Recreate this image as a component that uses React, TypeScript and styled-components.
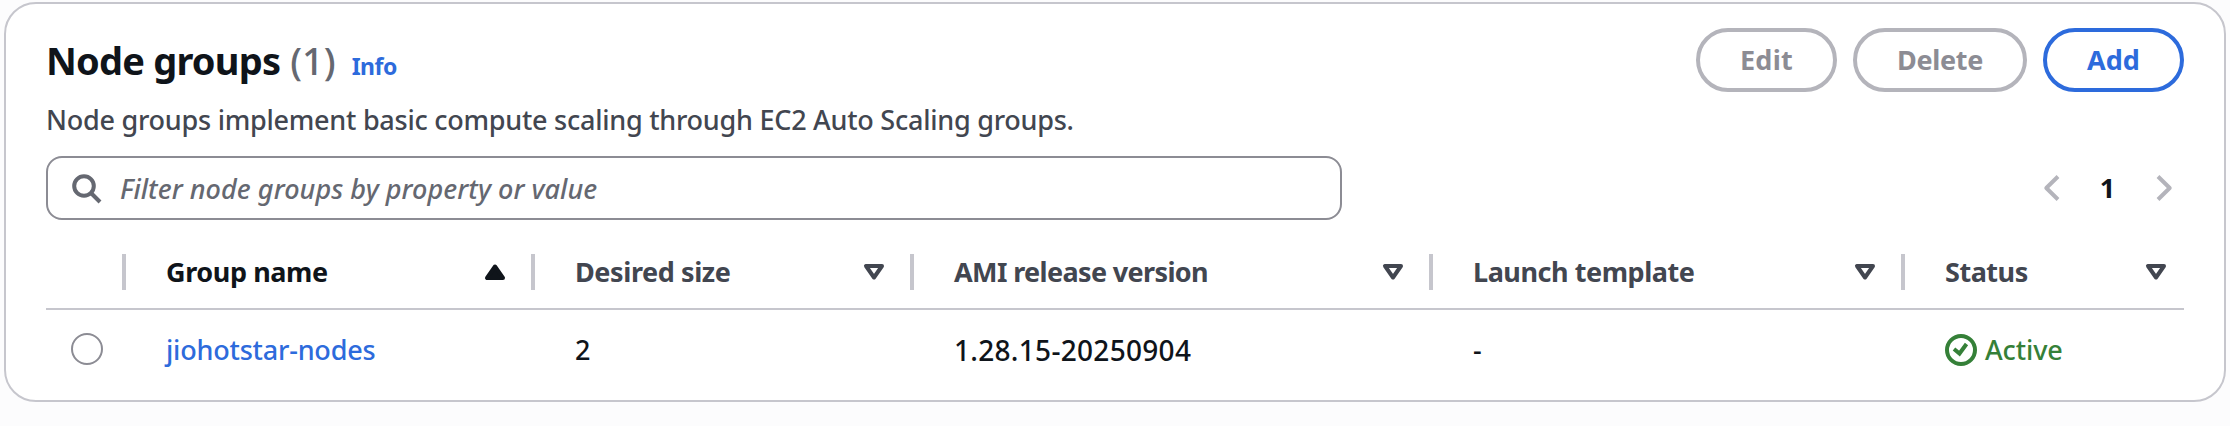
import React from 'react';
import styled, { createGlobalStyle } from 'styled-components';

const GlobalStyle = createGlobalStyle`
  *, *::before, *::after { box-sizing: border-box; }
  body {
    margin: 0;
    background: #fcfcfd;
    color: #0f141a;
    font: 500 27px/40px "Noto Sans", "Open Sans", sans-serif;
    overflow: hidden;
  }
`;

const Page = styled.main`
  height: 426px;
  padding: 2px 4px 0;
`;

const Card = styled.section`
  height: 400px;
  padding: 24px 40px 0;
  border: 2px solid #c6c6cd;
  border-radius: 32px;
  background: #fff;
`;

const Text = styled.span<{ $track?: number }>`
  letter-spacing: ${(p) => p.$track ?? 0}px;
  white-space: nowrap;
`;

const Header = styled.header`
  display: flex;
  justify-content: space-between;
  align-items: flex-start;
  height: 128px;
`;

const Heading = styled.div`
  padding-top: 8px;
`;

const TitleRow = styled.div`
  display: flex;
  align-items: baseline;
  height: 48px;
  line-height: 48px;
  margin-bottom: 16px;
`;

const Title = styled.h2`
  margin: 0;
  font-size: 38px;
  font-weight: 700;
  line-height: 48px;
`;

const Counter = styled.span`
  margin-left: 10px;
  font-size: 38px;
  font-weight: 500;
  color: #656871;
`;

const InfoLink = styled.a`
  margin-left: 16px;
  font-size: 23px;
  font-weight: 700;
  color: #2d6bdc;
`;

const Description = styled.p`
  margin: 0;
  color: #424650;
`;

const Actions = styled.div`
  display: flex;
  gap: 16px;
`;

const Button = styled.button<{ $width: number; $disabled?: boolean }>`
  width: ${(p) => p.$width}px;
  height: 64px;
  padding: 0;
  border: 4px solid ${(p) => (p.$disabled ? '#b4b4bb' : '#2d6bdc')};
  border-radius: 32px;
  background: #fff;
  color: ${(p) => (p.$disabled ? '#8c8c94' : '#2d6bdc')};
  font: 700 27px/40px "Noto Sans", "Open Sans", sans-serif;
`;

const Toolbar = styled.div`
  display: flex;
  justify-content: space-between;
  align-items: center;
  height: 64px;
`;

const SearchBox = styled.div`
  display: flex;
  align-items: center;
  width: 1296px;
  height: 64px;
  padding-left: 24px;
  border: 2px solid #8c8c94;
  border-radius: 16px;
  color: #656871;
  font-style: italic;

  svg { margin-right: 16px; }
  span { padding-top: 2px; }
`;

const Pagination = styled.nav`
  display: flex;
  align-items: center;
  padding-right: 4px;
  font-weight: 700;

  svg { color: #b4b4bb; }
  span { width: 80px; padding-right: 1px; text-align: center; }
`;

const Row = styled.div<{ $head?: boolean }>`
  display: grid;
  grid-template-columns: 80px 409px 379px 519px 472px 279px;
  align-items: center;
  height: ${(p) => (p.$head ? 74 : 80)}px;
  margin-top: ${(p) => (p.$head ? 16 : 0)}px;
  border-bottom: ${(p) => (p.$head ? '2px solid #c6c6cd' : '0')};
`;

const HeadCell = styled.div<{ $active?: boolean; $last?: boolean }>`
  display: flex;
  align-items: center;
  height: 36px;
  padding: 0 ${(p) => (p.$last ? 16 : 24)}px 0 40px;
  border-right: ${(p) => (p.$last ? 0 : 4)}px solid #c6c6cd;
  color: ${(p) => (p.$active ? '#0f141a' : '#424650')};
  font-weight: 700;

  svg { margin-left: auto; }
`;

const Cell = styled.div`
  display: flex;
  align-items: center;
  padding-left: 40px;
`;

const SelectCell = styled.div`
  padding: 0 0 2px 25px;
`;

const Radio = styled.div`
  width: 32px;
  height: 32px;
  border: 2px solid #8c8c94;
  border-radius: 50%;
`;

const NodeLink = styled.a`
  color: #2d6bdc;
`;

const Version = styled.span`
  font-size: 28px;
`;

const Status = styled.div`
  display: flex;
  align-items: center;
  gap: 8px;
  color: #358038;
`;

const SearchIcon = () => (
  <svg width="32" height="32" viewBox="0 0 32 32" fill="none" stroke="currentColor" strokeWidth="4">
    <circle cx="12" cy="14" r="9.8" />
    <path d="M19 21 28 30" />
  </svg>
);

const Chevron = ({ next }: { next?: boolean }) => (
  <svg width="32" height="32" viewBox="0 0 32 32" fill="none" stroke="currentColor" strokeWidth="4" strokeLinejoin="round">
    <path d={next ? 'M10 4.5 21.7 16 10 27.5' : 'M22 4.5 10.3 16 22 27.5'} />
  </svg>
);

const SortIcon = ({ ascending }: { ascending?: boolean }) => (
  <svg width="24" height="18" viewBox="0 0 24 18" stroke="currentColor" strokeWidth="4" strokeLinejoin="round">
    {ascending ? (
      <path d="M12 3.5 4 15h16z" fill="currentColor" />
    ) : (
      <path d="M4 3h16l-8 11.5z" fill="none" />
    )}
  </svg>
);

const CheckIcon = () => (
  <svg width="32" height="32" viewBox="0 0 32 32" fill="none" stroke="currentColor" strokeWidth="4">
    <circle cx="16" cy="16" r="14" />
    <path d="m9 15 5.5 4.5L21.5 10" />
  </svg>
);

const columns = [
  { label: 'Group name', track: -0.4, active: true },
  { label: 'Desired size', track: -0.4 },
  { label: 'AMI release version', track: -0.63 },
  { label: 'Launch template', track: -0.45 },
  { label: 'Status', track: -0.48 },
];

export default function App() {
  return (
    <>
      <GlobalStyle />
      <Page>
        <Card>
          <Header>
            <Heading>
              <TitleRow>
                <Title><Text $track={-0.8}>Node groups</Text></Title>
                <Counter>(1)</Counter>
                <InfoLink><Text $track={-0.5}>Info</Text></InfoLink>
              </TitleRow>
              <Description>
                <Text $track={-0.25}>
                  Node groups implement basic compute scaling through EC2 Auto Scaling groups.
                </Text>
              </Description>
            </Heading>
            <Actions>
              <Button $width={141} $disabled><Text $track={0.3}>Edit</Text></Button>
              <Button $width={174} $disabled><Text $track={-0.3}>Delete</Text></Button>
              <Button $width={141}>Add</Button>
            </Actions>
          </Header>
          <Toolbar>
            <SearchBox>
              <SearchIcon />
              <Text $track={0.05}>Filter node groups by property or value</Text>
            </SearchBox>
            <Pagination>
              <Chevron />
              <span>1</span>
              <Chevron next />
            </Pagination>
          </Toolbar>
          <Row $head>
            <HeadCell />
            {columns.map((c, i) => (
              <HeadCell key={c.label} $active={c.active} $last={i === columns.length - 1}>
                <Text $track={c.track}>{c.label}</Text>
                <SortIcon ascending={c.active} />
              </HeadCell>
            ))}
          </Row>
          <Row>
            <SelectCell><Radio /></SelectCell>
            <Cell><NodeLink><Text $track={-0.2}>jiohotstar-nodes</Text></NodeLink></Cell>
            <Cell>2</Cell>
            <Cell><Version><Text $track={0.3}>1.28.15-20250904</Text></Version></Cell>
            <Cell>-</Cell>
            <Cell>
              <Status>
                <CheckIcon />
                <Text $track={-0.1}>Active</Text>
              </Status>
            </Cell>
          </Row>
        </Card>
      </Page>
    </>
  );
}
